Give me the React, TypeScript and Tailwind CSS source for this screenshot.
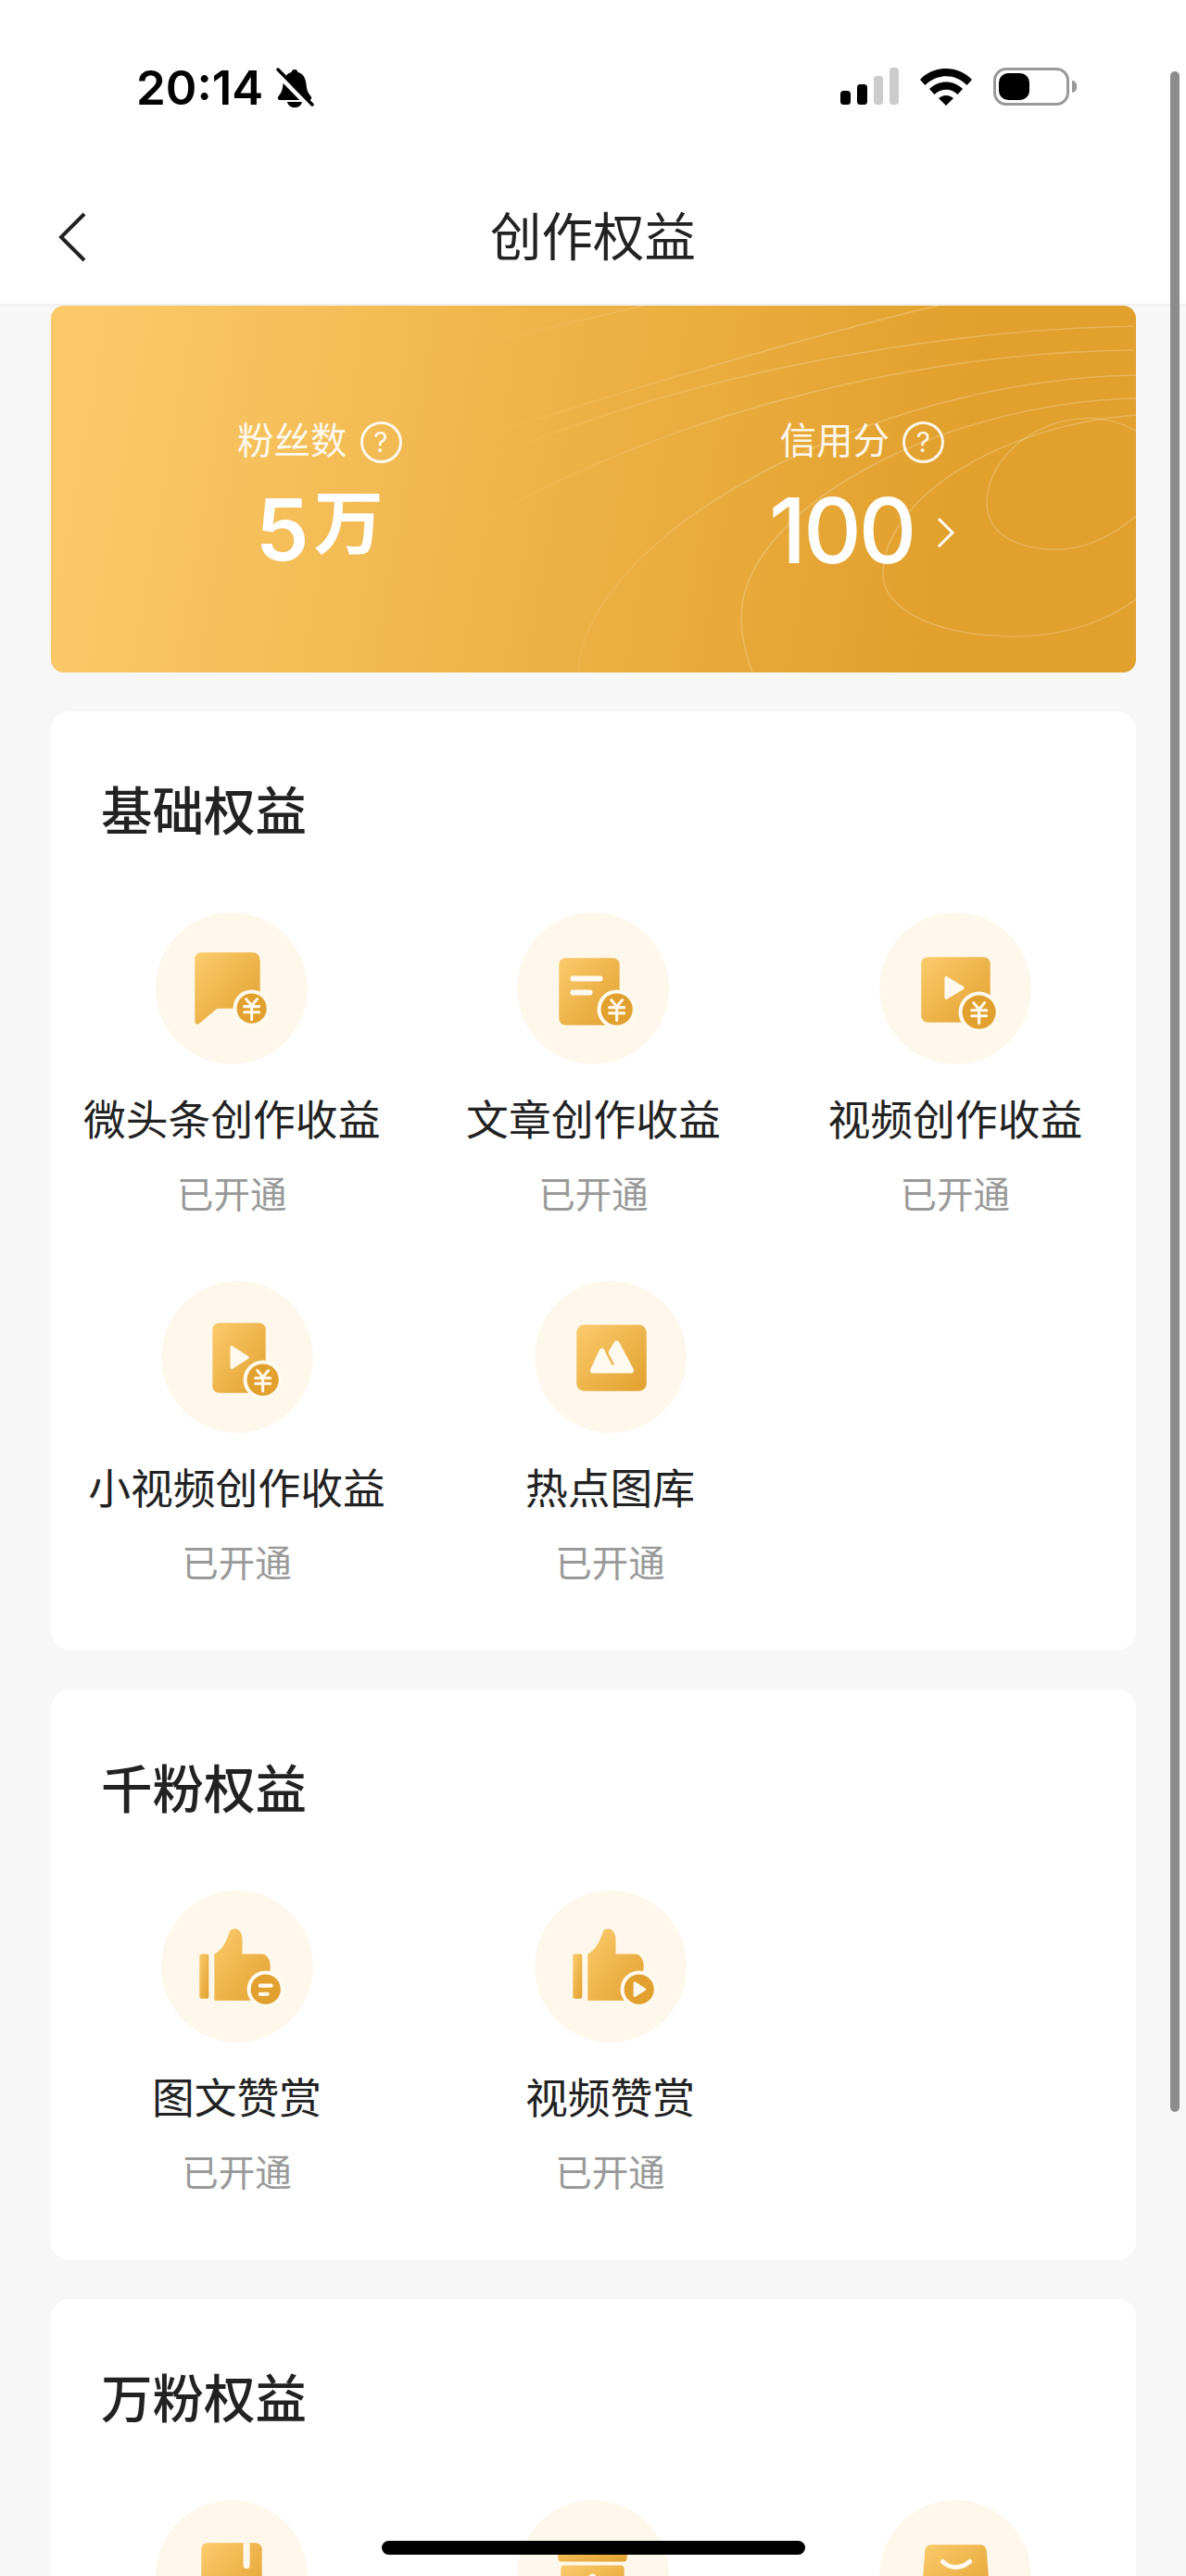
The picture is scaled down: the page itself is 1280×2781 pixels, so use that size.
import React from 'react';

const Defs = () => (
  <svg width="0" height="0" className="absolute">
    <defs>
      <linearGradient id="gold" x1="0" y1="0" x2="1" y2="1">
        <stop offset="0" stopColor="#fbcb6c" />
        <stop offset="1" stopColor="#e2a02e" />
      </linearGradient>
      <linearGradient id="fade" gradientUnits="userSpaceOnUse" x1="440" y1="0" x2="780" y2="0">
        <stop offset="0" stopColor="#fff" stopOpacity="0" />
        <stop offset="1" stopColor="#fff" stopOpacity="0.22" />
      </linearGradient>
    </defs>
  </svg>
);

const Yuan = ({ x, y, r = 17 }: { x: number; y: number; r?: number }) => (
  <g>
    <circle cx={x} cy={y} r={r + 4} fill="#fffaf0" />
    <circle cx={x} cy={y} r={r} fill="#e2a02e" />
    <path
      d={`M${x - 6} ${y - 10}L${x} ${y - 3}L${x + 6} ${y - 10}M${x - 8} ${y - 2}H${x + 8}M${x - 8} ${y + 4}H${x + 8}M${x} ${y - 3}V${y + 12}`}
      stroke="#fffaf0"
      strokeWidth="3"
      fill="none"
      strokeLinecap="round"
    />
  </g>
);

const thumb =
  'M57 68c8-4 13-13 16-23 1-3 3-4 6-4 5 0 8 5 8 12v15h21c5 0 9 6 9 13 0 5-1 8-3 11l-7 26c-1 0-2 0-3 0H57Z';

const icons: Record<string, React.ReactNode> = {
  chat: (
    <>
      <path d="M49 43h55a8 8 0 0 1 8 8v44a8 8 0 0 1-8 8H66l-19 16c-2 2-5 1-5-2V50a7 7 0 0 1 7-7Z" fill="url(#gold)" />
      <Yuan x={103} y={103} r={16} />
    </>
  ),
  doc: (
    <>
      <rect x="45" y="49" width="65" height="72" rx="7" fill="url(#gold)" />
      <rect x="57" y="68" width="35" height="6" rx="3" fill="#fffaf0" />
      <rect x="57" y="83" width="24" height="6" rx="3" fill="#fffaf0" />
      <Yuan x={107} y={104} r={17} />
    </>
  ),
  video: (
    <>
      <rect x="45" y="48" width="74" height="70" rx="7" fill="url(#gold)" />
      <path d="M70 70.500c0-1.500 1.500-2.300 2.800-1.500l17.500 10.500c1.200.8 1.200 2.200 0 3L72.800 93c-1.300.8-2.800 0-2.800-1.500Z" fill="#fffaf0" />
      <Yuan x={107} y={107} r={18} />
    </>
  ),
  short: (
    <>
      <rect x="55" y="45" width="57" height="75" rx="7" fill="url(#gold)" />
      <path d="M74 71.500c0-1.500 1.500-2.300 2.800-1.500l16.500 10.500c1.200.8 1.200 2.200 0 3L76.800 94c-1.300.8-2.800 0-2.800-1.500Z" fill="#fffaf0" />
      <Yuan x={109} y={106} r={17} />
    </>
  ),
  picture: (
    <>
      <rect x="45" y="47" width="75" height="71" rx="8" fill="url(#gold)" />
      <path
        d="M63 99h40c3 0 4-2 3-4.500L91 66c-1.500-3-4.500-3-6 0l-7 12-3-4c-1.500-2.500-4-2.500-5.500 0L60 94.500c-1 2.500 0 4.500 3 4.500Z"
        fill="#fffaf0"
      />
      <path d="M77 76l7 13" stroke="#eeb54c" strokeWidth="2.500" strokeLinecap="round" />
    </>
  ),
  thumbDoc: (
    <>
      <rect x="41" y="68" width="10" height="48" rx="2.500" fill="url(#gold)" />
      <path d={thumb} fill="url(#gold)" />
      <circle cx="112" cy="106" r="20" fill="#fffaf0" />
      <circle cx="112" cy="106" r="16" fill="#e2a02e" />
      <rect x="104" y="100" width="16" height="4" rx="2" fill="#fffaf0" />
      <rect x="104" y="109" width="12" height="4" rx="2" fill="#fffaf0" />
    </>
  ),
  thumbVideo: (
    <>
      <rect x="41" y="68" width="10" height="48" rx="2.500" fill="url(#gold)" />
      <path d={thumb} fill="url(#gold)" />
      <circle cx="112" cy="106" r="20" fill="#fffaf0" />
      <circle cx="112" cy="106" r="16" fill="#e2a02e" />
      <path d="M106 99v14c0 1 1 1.500 2 1l11-7c.8-.5.8-1.500 0-2l-11-7c-1-.5-2 0-2 1Z" fill="#fffaf0" />
    </>
  ),
  book: (
    <>
      <rect x="49" y="46" width="65" height="76" rx="7" fill="url(#gold)" />
      <path d="M94 46h7v24a3.500 3.500 0 0 1-7 0Z" fill="#fffaf0" />
    </>
  ),
  shop: (
    <>
      <rect x="44" y="46" width="74" height="20" rx="4" fill="url(#gold)" />
      <rect x="47" y="70" width="68" height="52" rx="4" fill="url(#gold)" />
      <circle cx="81" cy="83" r="4" fill="#fffaf0" />
    </>
  ),
  bag: (
    <>
      <path d="M56 48h52c4 0 6 2 7 6l5 66H44l5-66c1-4 3-6 7-6Z" fill="url(#gold)" />
      <path d="M68 66c8 8 20 8 29 0" stroke="#fffaf0" strokeWidth="5" strokeLinecap="round" fill="none" />
    </>
  ),
};

const Item = ({ icon, label, status = true }: { icon: string; label?: string; status?: boolean }) => (
  <div className="flex flex-col items-center">
    <svg width="164" height="164" viewBox="0 0 163 163" className="shrink-0">
      <circle cx="81.500" cy="81.500" r="81.500" fill="#fef8ec" />
      {icons[icon]}
    </svg>
    {label && <div className="mt-[31px] h-[60px] whitespace-nowrap text-[45.800px] leading-[60px] text-[#222]">{label}</div>}
    {status && <div className="mt-[25px] h-[50px] text-[39.500px] leading-[50px] text-[#999]">已开通</div>}
  </div>
);

const CardTitle = ({ children }: { children: React.ReactNode }) => (
  <h2 className="mb-[79px] h-[60px] pl-[54px] text-[55.500px] font-medium leading-[60px] text-[#222]">{children}</h2>
);

const Help = () => (
  <span className="ml-[14px] flex h-[45px] w-[45px] items-center justify-center rounded-full border-[3.500px] border-white/90 text-[30px] leading-none text-white/90">
    ?
  </span>
);

const App = () => {
  return (
    <div className="relative h-[2781px] w-[1280px] overflow-hidden bg-[#f7f7f7] font-['Inter','Noto_Sans_CJK_SC',sans-serif]">
      <Defs />

      <header className="h-[330px] border-b-2 border-[#f0f0f0] bg-white">
        <div className="flex h-[190px] items-start justify-between pl-[147px] pr-[118px] pt-[73px]">
          <div className="flex items-center">
            <span className="text-[51px] font-semibold leading-[42px] text-black">20:14</span>
            <svg width="42" height="44" viewBox="0 0 42 44" className="ml-[13px]">
              <path d="M21 2c2 0 3 1 3.500 3 6 1.500 8.500 7 9 13 .3 5 1.500 9 5 13 1.500 2 .5 4-2 4H5.500c-2.500 0-3.500-2-2-4 3.500-4 4.500-8 5-13 .5-6 3-11.500 9-13C18 3 19 2 21 2Z" fill="#000" />
              <path d="M13 37h16c-1 4-4 6-8 6s-7-2-8-6Z" fill="#000" />
              <path d="M2 5l36 37" stroke="#fff" strokeWidth="7" />
              <path d="M3 2l37 38" stroke="#000" strokeWidth="3.500" strokeLinecap="round" />
            </svg>
          </div>
          <div className="flex items-end">
            <svg width="64" height="41" viewBox="0 0 64 41">
              <rect x="0" y="25" width="11" height="15" rx="3.500" fill="#000" />
              <rect x="18" y="18" width="11" height="22" rx="3.500" fill="#000" />
              <rect x="36" y="9" width="10" height="31" rx="3.500" fill="#ccc" />
              <rect x="53" y="0" width="10" height="40" rx="3.500" fill="#ccc" />
            </svg>
            <svg width="58" height="41" viewBox="0 0 58 41" className="ml-[21px]">
              <path d="M1 13C16-3 42-3 57 13l-5.500 6C39 6 19 6 6.500 19Z" fill="#000" />
              <path d="M11 23c10-10 26-10 36 0l-5.500 6c-7-7-18-7-25 0Z" fill="#000" />
              <path d="M21 33c5-4 11-4 16 0l-8 8Z" fill="#000" />
            </svg>
            <div className="ml-[22px] flex items-center">
              <div className="flex h-[41px] w-[82px] items-center rounded-[14px] border-[3px] border-[#999] pl-[3px]">
                <div className="h-[29px] w-[33px] rounded-[10px] bg-black" />
              </div>
              <div className="ml-[3px] h-[13px] w-[5px] rounded-r-full bg-[#999]" />
            </div>
          </div>
        </div>
        <div className="relative flex h-[138px] items-start justify-center pt-[36px]">
          <svg width="30" height="54" viewBox="0 0 30 54" className="absolute left-[63px] top-[39px]">
            <path d="M28 2 3 27l25 25" stroke="#222" strokeWidth="4" fill="none" />
          </svg>
          <h1 className="h-[60px] text-[55.500px] font-normal leading-[60px] text-[#222]">创作权益</h1>
        </div>
      </header>

      <main className="pl-[55px] pr-[54px]">
        <section className="relative grid h-[396px] grid-cols-2 overflow-hidden rounded-[14px] bg-[linear-gradient(100deg,#fbc968_4%,#e2a02c_82%)] pt-[122px] text-white">
          <svg width="1171" height="396" viewBox="0 0 1171 396" fill="none" stroke="url(#fade)" strokeWidth="1.500" className="absolute left-0 top-0">
            <path d="M1171 135C1100 95 1010 150 1010 213c0 37 40 52 82 50 33-3 58-18 79-36" />
            <path d="M1171 118C1020 130 898 210 898 290c0 40 62 67 142 67 55 0 100-17 131-40" />
            <path d="M1171 100C960 105 745 220 745 337c0 20 5 40 12 59" />
            <path d="M1171 75C880 80 575 250 569 396" />
            <path d="M1169 48C950 50 680 110 470 230" />
            <path d="M1169 22C1000 25 700 60 440 180" />
            <path d="M957 0C830 30 620 90 440 150" />
            <path d="M639 0C580 15 500 30 440 50" />
          </svg>
          <div className="relative flex flex-col items-center pr-[6px]">
            <div className="flex h-[50px] items-center text-[39.500px] text-white/90">
              粉丝数
              <Help />
            </div>
            <div className="mt-[25px] flex h-[90px] items-center text-[92px] font-semibold leading-none">
              5<span className="ml-[5px] -translate-y-[8px] text-[75px] font-bold leading-none">万</span>
            </div>
          </div>
          <div className="relative flex flex-col items-center pr-[6px]">
            <div className="flex h-[50px] items-center text-[39.500px] text-white/90">
              信用分
              <Help />
            </div>
            <div className="mt-[25px] flex h-[90px] items-center text-[97px] font-medium leading-none tracking-[-3px]">
              100
              <svg width="20" height="34" viewBox="0 0 20 34" className="ml-[24px] mt-[6px]">
                <path d="M2 2l15 15L2 32" stroke="#fff" strokeWidth="3" fill="none" />
              </svg>
            </div>
          </div>
        </section>

        <section className="mt-[42px] rounded-[20px] bg-white pb-[68px] pt-[78px]">
          <CardTitle>基础权益</CardTitle>
          <div className="grid grid-cols-3">
            <Item icon="chat" label="微头条创作收益" />
            <Item icon="doc" label="文章创作收益" />
            <Item icon="video" label="视频创作收益" />
          </div>
          <div className="ml-[-1px] mt-[68px] grid grid-cols-[403px_403px]">
            <Item icon="short" label="小视频创作收益" />
            <Item icon="picture" label="热点图库" />
          </div>
        </section>

        <section className="mt-[43px] rounded-[20px] bg-white pb-[69px] pt-[78px]">
          <CardTitle>千粉权益</CardTitle>
          <div className="ml-[-1px] grid grid-cols-[403px_403px]">
            <Item icon="thumbDoc" label="图文赞赏" />
            <Item icon="thumbVideo" label="视频赞赏" />
          </div>
        </section>

        <section className="mt-[42px] rounded-[20px] bg-white pb-[67px] pt-[78px]">
          <CardTitle>万粉权益</CardTitle>
          <div className="grid grid-cols-3">
            <Item icon="book" status={false} />
            <Item icon="shop" status={false} />
            <Item icon="bag" status={false} />
          </div>
        </section>
      </main>

      {/* scrollbar and home indicator sit over the page */}
      <div className="absolute left-[1263px] top-[77px] h-[2203px] w-[10px] rounded-full bg-[#8c8c8c]" />
      <div className="absolute left-[412px] top-[2743px] h-[15px] w-[457px] rounded-full bg-black" />
    </div>
  );
};

export default App;
